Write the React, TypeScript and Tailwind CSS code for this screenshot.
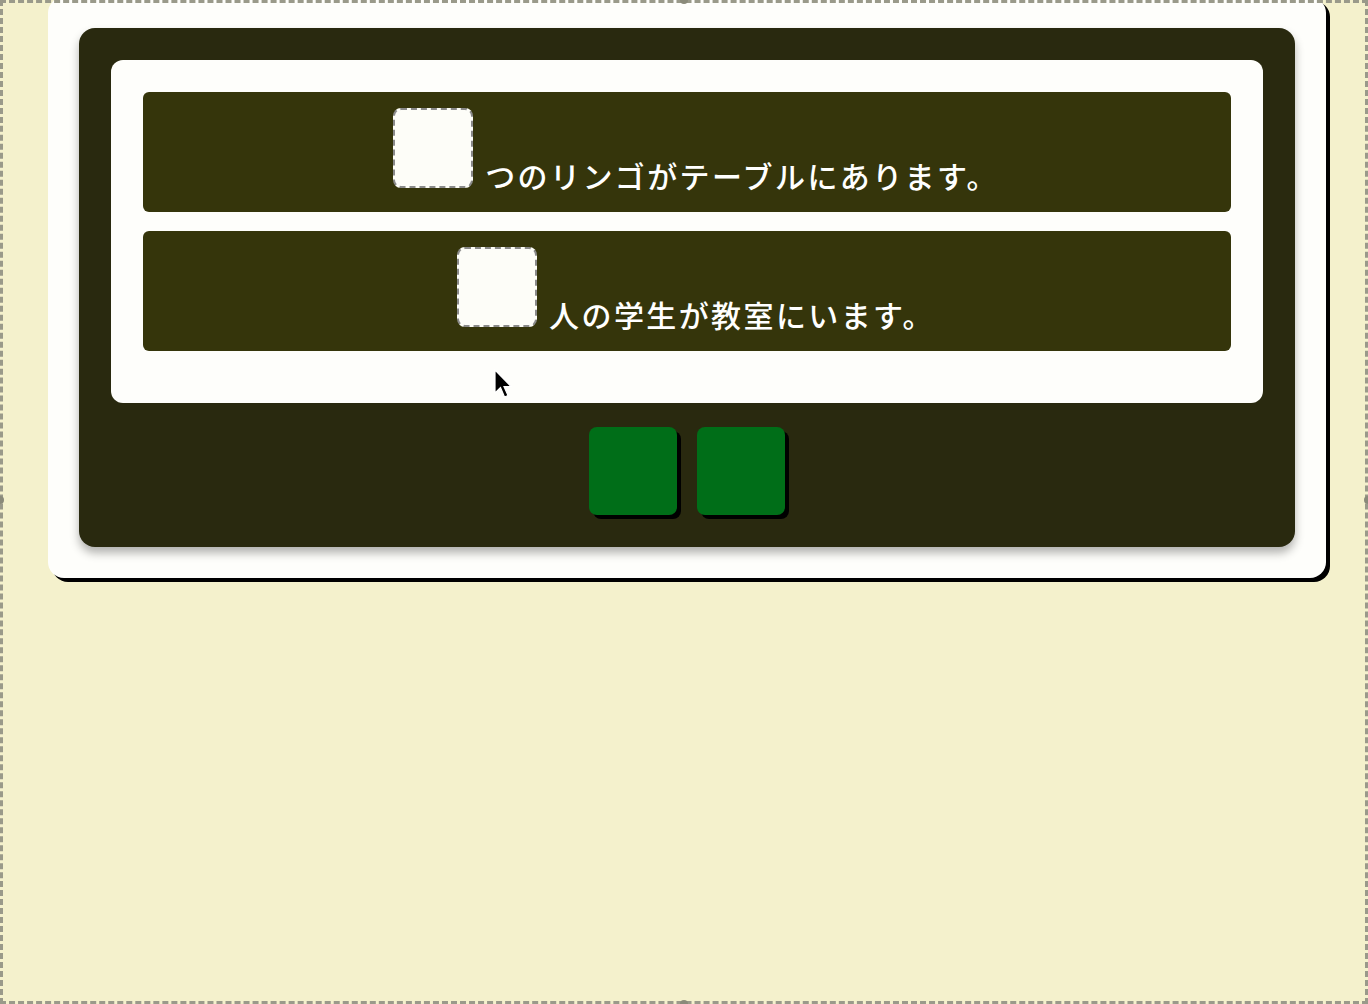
const questions = [
  { id: "apples", text: "つのリンゴがテーブルにあります。" },
  { id: "students", text: "人の学生が教室にいます。" },
];

function BlankBox() {
  return (
    <div className="h-20 w-20 shrink-0 rounded-lg border-2 border-dashed border-[#8a8a8a] bg-[#fdfdf8]" />
  );
}

function QuestionRow({ text }: { text: string }) {
  return (
    <div className="flex h-[120px] items-start justify-center rounded-md bg-[#35350b] pt-4">
      <div className="flex items-end">
        <BlankBox />
        <span className="mb-[-2px] ml-3 mr-[-18px] text-[30px] font-medium leading-none tracking-[2.4px] text-white">
          {text}
        </span>
      </div>
    </div>
  );
}

function AnswerTile() {
  return (
    <button
      type="button"
      className="h-[88px] w-[88px] rounded-lg bg-[#006e18] shadow-[4px_4px_0_#000]"
    />
  );
}

function Handle({ className }: { className: string }) {
  return <div className={`absolute h-2 w-2 rounded-full bg-[#8a8a7a] ${className}`} />;
}

export default function App() {
  return (
    <div
      className="relative h-[1004px] w-[1368px] overflow-hidden bg-[#f4f1cc]"
      style={{ fontFamily: '"Noto Sans CJK JP", "Noto Sans", sans-serif' }}
    >
      <div className="ml-12 mt-[-3px] w-[1278px] rounded-2xl bg-[#fefefb] p-[31px] shadow-[4px_4px_0_#000]">
        <div className="rounded-2xl bg-[#29290f] p-8 shadow-[0_6px_10px_rgba(0,0,0,0.3)]">
          <div className="flex flex-col gap-[19px] rounded-xl bg-[#fefefb] px-8 pb-[52px] pt-8">
            {questions.map((q) => (
              <QuestionRow key={q.id} text={q.text} />
            ))}
          </div>
          <div className="mt-6 flex justify-center gap-5">
            <AnswerTile />
            <AnswerTile />
          </div>
        </div>
      </div>

      {/* cursor */}
      <svg
        className="absolute left-[494px] top-[369px]"
        width="18"
        height="32"
        viewBox="0 0 18 32"
      >
        <path d="M1 1 L1 24 L6.5 18.5 L10.5 28 L14 26.5 L10 17.5 L17 17.5 Z" fill="#000" stroke="#fff" strokeWidth="1.2" />
      </svg>

      {/* editor frame */}
      <div className="pointer-events-none absolute inset-0 border-[3px] border-dashed border-[#9a9a8a]" />
      <Handle className="left-[680px] top-[-4px]" />
      <Handle className="left-[680px] bottom-[-4px]" />
      <Handle className="left-[-4px] top-[496px]" />
      <Handle className="right-[-4px] top-[496px]" />
    </div>
  );
}
